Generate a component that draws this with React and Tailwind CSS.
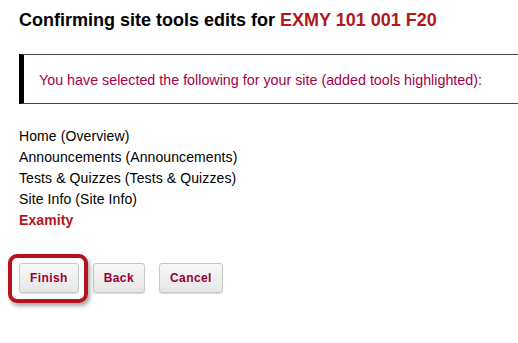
const tools = [
  "Home (Overview)",
  "Announcements (Announcements)",
  "Tests & Quizzes (Tests & Quizzes)",
  "Site Info (Site Info)",
];

const buttonClass =
  "h-[30px] px-[10px] border border-[#c8c8c8] rounded-[3px] bg-gradient-to-b from-[#f8f8f8] to-[#e6e6e6] shadow-[0_1px_1px_rgba(0,0,0,0.15)] text-[12px] font-bold tracking-[0.4px] text-[#990033]";

export default function App() {
  return (
    <div
      className="w-[518px] h-[343px] overflow-hidden bg-white pl-[19px]"
      style={{ fontFamily: '"Liberation Sans", Arial, sans-serif' }}
    >
      <h1 className="mt-[10px] text-[18px] leading-[21px] font-bold text-black">
        Confirming site tools edits for{" "}
        <span className="text-[#b0181c]">EXMY 101 001 F20</span>
      </h1>

      <div className="mt-[23px] h-[50px] -mr-[40px] flex items-center border-y border-[#444] border-l-[5px] border-l-black pl-[15px]">
        <p className="text-[14.3px] text-[#a3004a] mt-[4px]">
          You have selected the following for your site (added tools highlighted):
        </p>
      </div>

      <ul className="mt-[22px] text-[14px] leading-[21px] tracking-[0.1px] text-black">
        {tools.map(t => (
          <li key={t}>{t}</li>
        ))}
        <li className="font-bold text-[#b5161c]">Examity</li>
      </ul>

      <div className="mt-[32px] flex gap-[14px]">
        <div className="relative">
          <button type="button" className={buttonClass}>
            Finish
          </button>
          <div className="absolute -left-[11px] -top-[9px] -right-[9px] -bottom-[10px] border-[4px] border-[#b5121b] rounded-[9px] shadow-[2px_3px_4px_rgba(0,0,0,0.35)] pointer-events-none" />
        </div>
        <button type="button" className={buttonClass}>
          Back
        </button>
        <button type="button" className={buttonClass}>
          Cancel
        </button>
      </div>
    </div>
  );
}
